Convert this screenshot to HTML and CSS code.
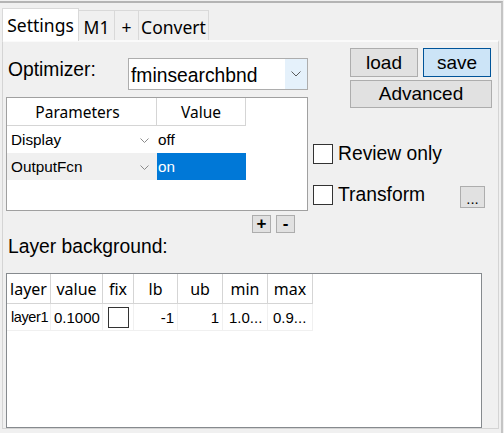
FILE: index.html
```html
<!DOCTYPE html>
<html>
<head>
<meta charset="utf-8">
<link rel="stylesheet" href="styles.css">
</head>
<body>
<div class="frame">
  <div class="tabs">
    <div class="tab active w-settings">Settings</div>
    <div class="tab w-m1">M1</div>
    <div class="tab w-plus">+</div>
    <div class="tab w-convert">Convert</div>
  </div>
  <div class="panel">
    <div class="upper">
      <div class="left">
        <div class="opt-row">
          <span class="label opt-label">Optimizer:</span>
          <div class="select">
            <span class="select-text">fminsearchbnd</span>
            <span class="select-arrow"><svg width="10" height="6" viewBox="0 0 10 6"><polyline points="0.5,0.5 5,5 9.5,0.5" fill="none" stroke="#5a5a5a" stroke-width="1"/></svg></span>
          </div>
        </div>
        <div class="ptable">
          <div class="prow phead">
            <div class="pc c1">Parameters</div>
            <div class="pc c2">Value</div>
          </div>
          <div class="prow">
            <div class="pc c1"><span>Display</span><svg class="chev" width="9" height="5" viewBox="0 0 9 5"><polyline points="0.5,0.5 4.5,4.5 8.5,0.5" fill="none" stroke="#8a8a8a" stroke-width="1"/></svg></div>
            <div class="pc c2">off</div>
          </div>
          <div class="prow">
            <div class="pc c1 alt"><span>OutputFcn</span><svg class="chev" width="9" height="5" viewBox="0 0 9 5"><polyline points="0.5,0.5 4.5,4.5 8.5,0.5" fill="none" stroke="#8a8a8a" stroke-width="1"/></svg></div>
            <div class="pc c2 sel">on</div>
          </div>
        </div>
        <div class="pm">
          <div class="small-btn">+</div>
          <div class="small-btn">-</div>
        </div>
      </div>
      <div class="right">
        <div class="btns">
          <div class="btn-row">
            <div class="btn w-load">load</div>
            <div class="btn btn-primary w-save">save</div>
          </div>
          <div class="btn w-adv">Advanced</div>
        </div>
        <div class="check-row review">
          <span class="box"></span><span class="label">Review only</span>
        </div>
        <div class="check-row transform">
          <span class="box"></span><span class="label">Transform</span>
          <div class="dots-btn">...</div>
        </div>
      </div>
    </div>
    <div class="label layer-label">Layer background:</div>
    <div class="ltable">
      <div class="lrow lhead">
        <div class="lc k1">layer</div>
        <div class="lc k2">value</div>
        <div class="lc k3">fix</div>
        <div class="lc k4">lb</div>
        <div class="lc k5">ub</div>
        <div class="lc k6">min</div>
        <div class="lc k7">max</div>
      </div>
      <div class="lrow ldata">
        <div class="lc k1 left">layer1</div>
        <div class="lc k2 left">0.1000</div>
        <div class="lc k3"><span class="fixbox"></span></div>
        <div class="lc k4 right">-1</div>
        <div class="lc k5 right">1</div>
        <div class="lc k6 left6">1.0...</div>
        <div class="lc k7 left5">0.9...</div>
      </div>
    </div>
  </div>
</div>
</body>
</html>
```

FILE: styles.css
```css
* { box-sizing: border-box; }
html, body { margin: 0; padding: 0; }
body {
  width: 504px;
  height: 433px;
  overflow: hidden;
  background: #f0f0f0;
  font-family: "Liberation Sans", Arial, sans-serif;
  color: #000;
}
.frame {
  margin-top: 1px;
  width: 503px;
  height: 432px;
  border-top: 2px solid #b4b4b4;
  border-right: 2px solid #c4c4c4;
  display: flex;
  flex-direction: column;
}
.tabs {
  display: flex;
  align-items: flex-end;
  height: 37px;
  padding-left: 2px;
}
.tab {
  font-family: "Noto Sans", sans-serif;
  font-size: 17.5px;
  height: 30px;
  padding-top: 3px;
  border: 1px solid #d9d9d9;
  border-bottom: none;
  margin-left: -1px;
  display: flex;
  align-items: center;
  justify-content: center;
  background: #f0f0f0;
  white-space: nowrap;
}
.tab.active {
  margin-left: 0;
  height: 33px;
  padding-top: 0;
  margin-bottom: -1px;
  background: #fff;
  position: relative;
  z-index: 1;
}
.w-settings { width: 77px; }
.w-m1 { width: 37px; }
.w-plus { width: 25px; }
.w-convert { width: 71px; }

.panel {
  margin-left: 2px;
  width: 497px;
  height: 389px;
  border: 1px solid #d4d4d4;
  border-top: 2px solid #fafafa;
  display: flex;
  flex-direction: column;
}
.label {
  font-size: 19.3px;
  line-height: 22px;
  white-space: nowrap;
}
.upper {
  display: flex;
  padding-top: 6px;
}
.left {
  width: 305px;
  padding-left: 3px;
}
.opt-row {
  display: flex;
  align-items: flex-start;
  height: 49px;
}
.opt-label {
  width: 122px;
  padding-left: 2px;
  margin-top: 11px;
}
.select {
  margin-top: 10px;
  width: 180px;
  height: 32px;
  border: 1px solid #adadad;
  background: #fff;
  display: flex;
  align-items: stretch;
}
.select-text {
  flex: 1;
  font-size: 19.3px;
  padding-left: 2px;
  padding-top: 3px;
  display: flex;
  align-items: center;
}
.select-arrow {
  width: 22px;
  background: #e5f1fb;
  display: flex;
  align-items: center;
  justify-content: center;
}
.ptable {
  width: 302px;
  height: 114px;
  border: 1px solid #a0a0a0;
  background: #fff;
}
.prow {
  display: flex;
  height: 27px;
}
.prow.phead {
  height: 28px;
}
.pc {
  font-size: 15.3px;
  display: flex;
  align-items: center;
}
.phead .pc {
  font-family: "Noto Sans", sans-serif;
  font-size: 15.5px;
  justify-content: center;
  border-right: 1px solid #d5d5d5;
  border-bottom: 1px solid #d5d5d5;
  padding-top: 1px;
}
.c1 { width: 150px; padding-left: 4px; }
.c2 { width: 89px; padding-left: 1px; }
.phead .c1, .phead .c2 { padding-left: 0; }
.c1 { justify-content: space-between; padding-right: 8px; }
.c1.alt { background: #f0f0f0; }
.c2.sel { background: #0078d7; color: #fff; }
.chev { margin-top: 1px; }
.pm {
  display: flex;
  gap: 5px;
  margin-top: 4px;
  margin-left: 246px;
}
.small-btn {
  width: 19px;
  height: 18px;
  background: #e1e1e1;
  border: 1px solid #adadad;
  font-size: 17px;
  font-weight: bold;
  line-height: 16px;
  text-align: center;
}
.right {
  width: 184px;
}
.btns {
  margin-left: 42px;
  width: 142px;
}
.btn-row {
  display: flex;
  gap: 5px;
  margin-bottom: 3px;
}
.btn {
  height: 29px;
  background: #e1e1e1;
  border: 1px solid #adadad;
  font-size: 19px;
  display: flex;
  align-items: center;
  justify-content: center;
}
.btn-primary {
  background: #cce4f7;
  border-color: #005499;
}
.w-load, .w-save { width: 68px; }
.w-adv { width: 142px; height: 28px; }
.check-row {
  display: flex;
  align-items: flex-start;
  margin-left: 5px;
  gap: 5px;
}
.check-row .label { margin-top: -1px; }
.review { margin-top: 36px; }
.transform { margin-top: 20px; padding-right: 7px; }
.box {
  width: 20px;
  height: 20px;
  border: 1px solid #333;
  background: #fff;
  flex: none;
}
.dots-btn {
  margin-left: auto;
  width: 25px;
  height: 22px;
  background: #e1e1e1;
  border: 1px solid #adadad;
  font-size: 15px;
  line-height: 24px;
  text-align: center;
  margin-top: 1px;
}
.layer-label {
  margin-top: 3px;
  margin-left: 5px;
}
.ltable {
  margin-top: 15px;
  margin-left: 3px;
  width: 476px;
  height: 155px;
  border: 1px solid #868a8e;
  background: #fff;
}
.lrow { display: flex; }
.lhead { height: 30px; }
.ldata { height: 27px; }
.lc {
  display: flex;
  align-items: center;
  justify-content: center;
  white-space: nowrap;
}
.lhead .lc {
  font-family: "Noto Sans", sans-serif;
  font-size: 16px;
  border-right: 1px solid #d5d5d5;
  border-bottom: 1px solid #d5d5d5;
  padding-top: 1px;
}
.ldata .lc {
  font-size: 15px;
  border-right: 1px solid #f0f0f0;
  border-bottom: 1px solid #f0f0f0;
}
.ldata .k1 { font-size: 14.5px; letter-spacing: -0.4px; }
.k1 { width: 44px; }
.k2 { width: 52px; }
.k3 { width: 31px; }
.k4 { width: 44px; }
.k5 { width: 45px; }
.k6 { width: 45px; }
.k7 { width: 45px; }
.lc.left { justify-content: flex-start; padding-left: 4px; }
.ldata .k2.left { padding-left: 3px; }
.lc.right { justify-content: flex-end; padding-right: 3px; }
.lc.left6 { justify-content: flex-start; padding-left: 6px; }
.lc.left5 { justify-content: flex-start; padding-left: 5px; }
.fixbox {
  width: 21px;
  height: 21px;
  border: 1px solid #333;
  background: #fff;
  margin-left: 1px;
}
```
